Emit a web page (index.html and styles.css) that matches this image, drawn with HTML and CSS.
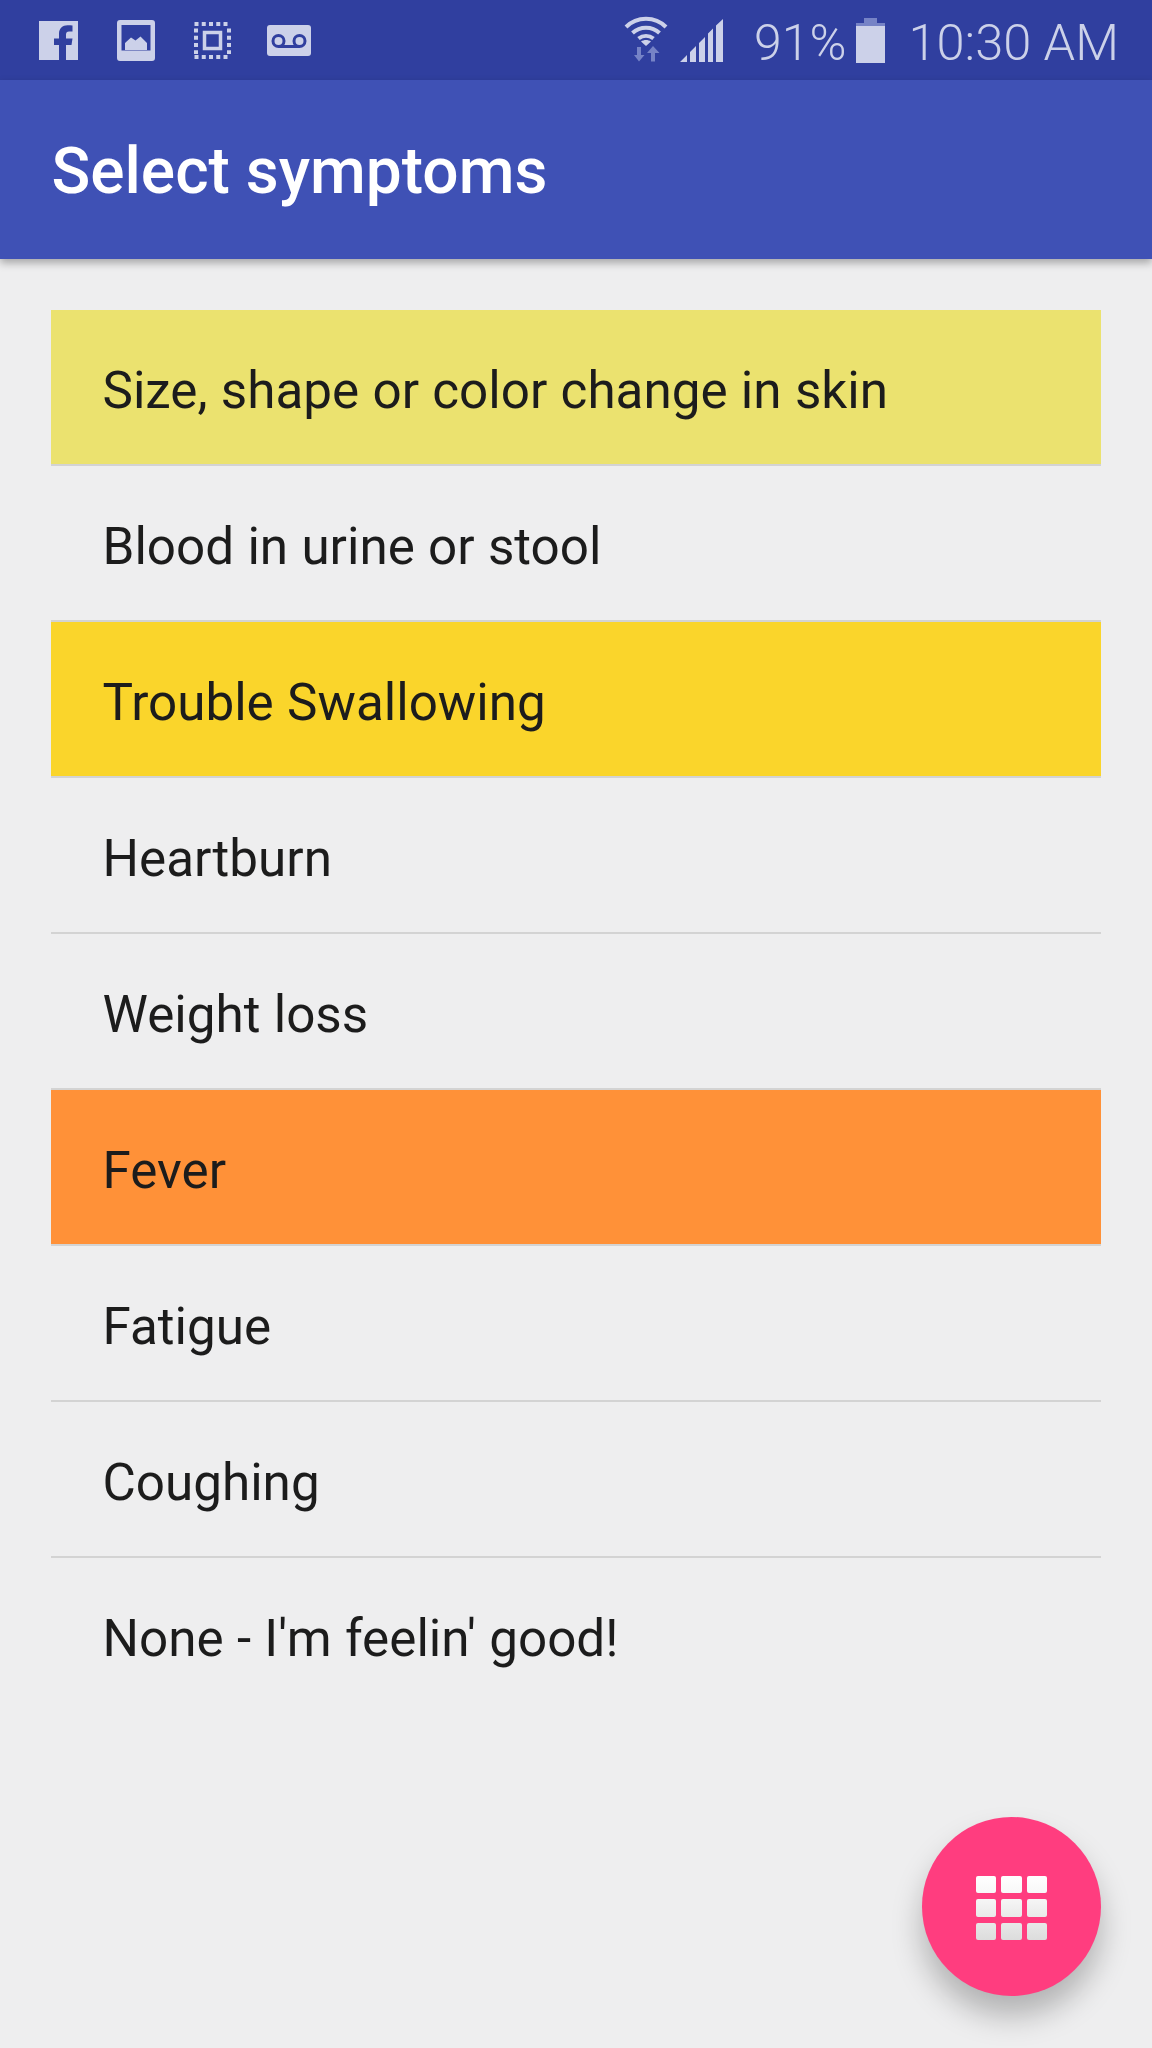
FILE: index.html
```html
<!DOCTYPE html>
<html lang="en">
<head>
    <meta charset="UTF-8">
    <meta name="viewport" content="width=device-width, initial-scale=1.0">
    <title>Select symptoms</title>
    <link rel="stylesheet" href="styles.css">
</head>
<body>

<div class="status-bar">
    <div class="status-left">
        <!-- facebook -->
        <svg class="icon-fb" width="39" height="39" viewBox="0 0 39 39">
            <path fill="#ccd1e9" d="M0 0H39V39H27V24H32.500L33.500 17.500H27V13.500C27 11.500 28 10.500 30 10.500H33.500V4.500C32 4.300 30.500 4.200 28.500 4.200C23.500 4.200 20 7.200 20 12.800V17.500H15V24H20V39H0Z"/>
        </svg>
        <!-- gallery -->
        <svg class="icon-pic" width="38" height="41" viewBox="0 0 38 41">
            <path fill="#ccd1e9" fill-rule="evenodd" d="M3 0H35Q38 0 38 3V38Q38 41 35 41H3Q0 41 0 38V3Q0 0 3 0ZM4.500 5V30.500H33.500V5Z"/>
            <path fill="#ccd1e9" d="M8 30V23L14 17.500L18.500 20.500L23.500 16.500L30 23V30Z"/>
        </svg>
        <!-- screenshot -->
        <svg class="icon-dots" width="37" height="37" viewBox="0 0 37 37">
            <rect x="10.500" y="10.500" width="16" height="16" fill="none" stroke="#ccd1e9" stroke-width="3.500"/>
            <path fill="none" stroke="#ccd1e9" stroke-width="4" stroke-dasharray="4 3.250" d="M0.500 2H36.500M0.500 35H36.500M2 6.500V32M35 6.500V32"/>
        </svg>
        <!-- voicemail -->
        <svg class="icon-vm" width="44" height="31" viewBox="0 0 44 31">
            <rect width="44" height="31" rx="3" fill="#ccd1e9"/>
            <circle cx="11.500" cy="16" r="5.500" fill="none" stroke="#303f9f" stroke-width="3"/>
            <circle cx="32.500" cy="16" r="5.500" fill="none" stroke="#303f9f" stroke-width="3"/>
            <rect x="11.500" y="20" width="21" height="3" fill="#303f9f"/>
        </svg>
    </div>
    <div class="status-right">
        <!-- wifi with arrows -->
        <svg class="icon-wifi" width="44" height="46" viewBox="0 0 44 46">
            <g fill="none" stroke="#ccd1e9" stroke-width="4">
                <path d="M2 11C13 0 31 0 42 11"/>
                <path d="M8.500 17C16 10 28 10 35.500 17"/>
                <path d="M14.500 22.500C19 19 25 19 29.500 22.500"/>
            </g>
            <path fill="#ccd1e9" d="M17 25.500C20 23.500 24 23.500 27 25.500L22 30Z"/>
            <path fill="#7683c6" d="M13 31H17V39H20.500L15 45.500L10 39H13ZM27 45.500H31V37H35.500L29 30L23 37H27Z"/>
        </svg>
        <!-- signal -->
        <svg class="icon-signal" width="43" height="43" viewBox="0 0 43 43">
            <path fill="#ccd1e9" d="M0 43L7 36V43ZM10 33L16 27V43H10ZM19 24L25 18V43H19ZM28 14.500L33 9.500V43H28ZM36 6.500L43 0V43H36Z"/>
        </svg>
        <span class="battery-text">91%</span>
        <!-- battery -->
        <svg class="icon-battery" width="29" height="45" viewBox="0 0 29 45">
            <rect x="8" y="0" width="13" height="6" fill="#7683c6"/>
            <rect x="0" y="5" width="29" height="3" fill="#7683c6"/>
            <rect x="0" y="8" width="29" height="37" fill="#ccd1e9"/>
        </svg>
        <span class="clock">10:30 AM</span>
    </div>
</div>

<div class="app-bar">Select symptoms</div>

<div class="symptom-list">
    <div class="symptom light-yellow">Size, shape or color change in skin</div>
    <div class="symptom">Blood in urine or stool</div>
    <div class="symptom yellow">Trouble Swallowing</div>
    <div class="symptom">Heartburn</div>
    <div class="symptom">Weight loss</div>
    <div class="symptom orange">Fever</div>
    <div class="symptom">Fatigue</div>
    <div class="symptom">Coughing</div>
    <div class="symptom last">None - I'm feelin' good!</div>
</div>

<div class="fab">
    <div class="fab-grid">
        <span class="row-1"></span><span class="row-1"></span><span class="row-1"></span>
        <span class="row-2"></span><span class="row-2"></span><span class="row-2"></span>
        <span class="row-3"></span><span class="row-3"></span><span class="row-3"></span>
    </div>
</div>

</body>
</html>
```

FILE: styles.css
```css
html, body {
    height: 100%;
}

body {
    font-family: 'Roboto', 'Liberation Sans', sans-serif;
    background-color: #eeeeef;
    margin: 0;
    position: relative;
    overflow: hidden;
}

.status-bar {
    height: 80px;
    background-color: #303f9f;
    display: flex;
    justify-content: space-between;
    align-items: center;
    color: #ccd1e9;
}

.status-left {
    display: flex;
    align-items: center;
    padding-left: 39px;
}

.icon-fb {
    margin-right: 39px;
}

.icon-pic {
    margin-right: 39px;
}

.icon-dots {
    margin-right: 36px;
}

.status-right {
    display: flex;
    align-items: center;
    padding-right: 33px;
}

.icon-wifi {
    margin-right: 12px;
    margin-bottom: 2px;
}

.icon-signal {
    margin-right: 31px;
}

.battery-text {
    font-size: 50px;
    font-weight: 300;
    margin-top: 5px;
    margin-right: 10px;
}

.icon-battery {
    margin-right: 23px;
}

.clock {
    font-size: 50.6px;
    font-weight: 300;
    margin-top: 5px;
}

.app-bar {
    height: 179px;
    box-sizing: border-box;
    padding-left: 51.5px;
    background-color: #3f51b5;
    box-shadow: 0 4px 8px rgba(0, 0, 0, 0.3);
    color: #fff;
    font-size: 64px;
    font-weight: 500;
    line-height: 184px;
}

.symptom-list {
    margin: 51px 51px 0;
}

.symptom {
    height: 155.95px;
    box-sizing: border-box;
    padding-left: 51.5px;
    border-bottom: 2px solid #d3d3d3;
    color: #1c1c1c;
    font-size: 51.2px;
    word-spacing: 0.6px;
    line-height: 161px;
}

.symptom.last {
    border-bottom: none;
}

.light-yellow {
    background-color: #ebe26f;
}

.yellow {
    background-color: #fad52b;
}

.orange {
    background-color: #ff9138;
}

.fab {
    position: absolute;
    left: 922px;
    top: 1817px;
    width: 179px;
    height: 179px;
    border-radius: 50%;
    background-color: #ff3d7f;
    box-shadow: 0 20px 30px rgba(0, 0, 0, 0.25);
    display: flex;
    justify-content: center;
    align-items: center;
}

.fab-grid {
    display: grid;
    grid-template-columns: repeat(3, 20.5px);
    grid-auto-rows: 17.5px;
    gap: 6px 5px;
    margin-top: 3px;
}

.fab-grid span {
    border-radius: 2px;
}

.row-1 {
    background: linear-gradient(#ffffff, #f8f8f8);
}

.row-2 {
    background: linear-gradient(#f6f6f6, #e9e9e9);
}

.row-3 {
    background: linear-gradient(#e8e8e8, #dcdcdc);
}
```
